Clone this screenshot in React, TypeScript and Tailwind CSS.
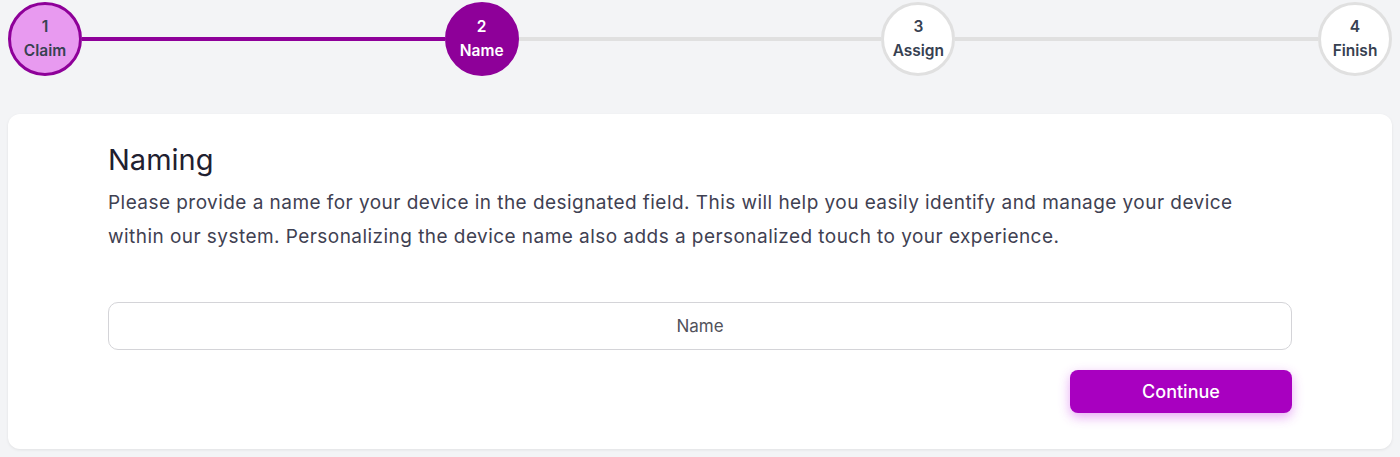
import React from "react";

const steps = [
  { n: "1", label: "Claim", state: "done" },
  { n: "2", label: "Name", state: "active" },
  { n: "3", label: "Assign", state: "todo" },
  { n: "4", label: "Finish", state: "todo" },
];

function Circle({ n, label, state }: { n: string; label: string; state: string }) {
  const cls =
    state === "done"
      ? "bg-[#e89af0] border-[#8e0099] text-[#374151]"
      : state === "active"
      ? "bg-[#8e0099] border-[#8e0099] text-white"
      : "bg-white border-[#e0e0e0] text-[#374151]";
  return (
    <div
      className={`w-[74px] h-[74px] shrink-0 rounded-full border-[3px] flex flex-col items-center justify-center text-[15.5px] leading-[24px] font-semibold ${cls}`}
    >
      <span>{n}</span>
      <span>{label}</span>
    </div>
  );
}

export default function App() {
  return (
    <div
      className="min-h-[457px] bg-[#f3f4f6] px-2 pt-[2px] pb-2"
      style={{ fontFamily: "Inter, 'Noto Sans', sans-serif" }}
    >
      <div className="flex items-center">
        <Circle {...steps[0]} />
        <div className="flex-1 h-1 bg-[#8e0099]" />
        <Circle {...steps[1]} />
        <div className="flex-1 h-1 bg-[#e0e0e0]" />
        <Circle {...steps[2]} />
        <div className="flex-1 h-1 bg-[#e0e0e0]" />
        <Circle {...steps[3]} />
      </div>
      <div className="mt-[38px] bg-white rounded-xl shadow-[0_1px_3px_rgba(0,0,0,0.08)] px-[100px] pt-[26px] pb-[36px]">
        <h2 className="text-[29px] leading-[40px] text-[#1f2030] font-normal">Naming</h2>
        <p className="mt-[6px] pr-[24px] text-[19px] leading-[34px] text-[#3f4152] tracking-[0.45px]">
          Please provide a name for your device in the designated field. This will help you easily identify and manage your device
          within our system. Personalizing the device name also adds a personalized touch to your experience.
        </p>
        <input
          placeholder="Name"
          className="mt-[48px] block w-full h-[48px] rounded-[10px] border border-[#d4d4d8] text-center text-[17px] text-[#374151] placeholder:text-[#52525b] outline-none"
        />
        <div className="mt-[20px] flex justify-end">
          <button className="w-[222px] h-[43px] rounded-[8px] bg-[#a800c0] text-white text-[18px] font-medium shadow-[0_4px_12px_rgba(200,60,230,0.45)]">
            Continue
          </button>
        </div>
      </div>
    </div>
  );
}
